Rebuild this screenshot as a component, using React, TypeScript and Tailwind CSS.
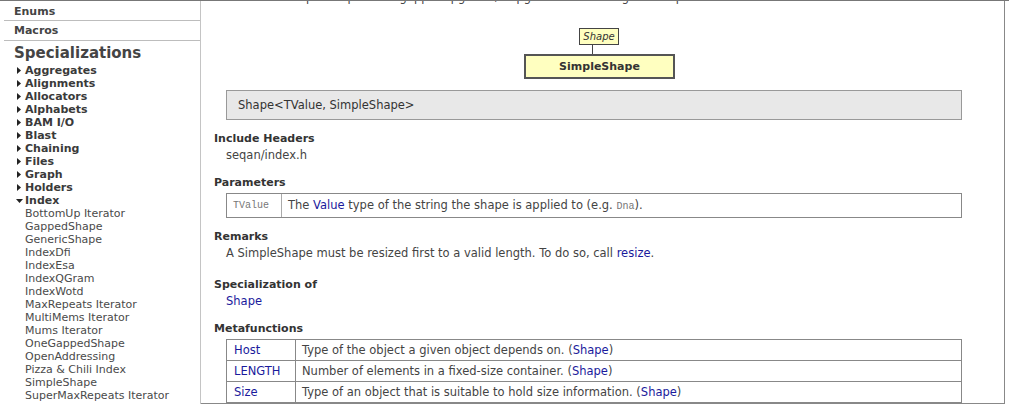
const groups = [
  "Aggregates",
  "Alignments",
  "Allocators",
  "Alphabets",
  "BAM I/O",
  "Blast",
  "Chaining",
  "Files",
  "Graph",
  "Holders",
];

const indexItems = [
  "BottomUp Iterator",
  "GappedShape",
  "GenericShape",
  "IndexDfi",
  "IndexEsa",
  "IndexQGram",
  "IndexWotd",
  "MaxRepeats Iterator",
  "MultiMems Iterator",
  "Mums Iterator",
  "OneGappedShape",
  "OpenAddressing",
  "Pizza & Chili Index",
  "SimpleShape",
  "SuperMaxRepeats Iterator",
];

const metafunctions = [
  { name: "Host", text: "Type of the object a given object depends on." },
  { name: "LENGTH", text: "Number of elements in a fixed-size container." },
  { name: "Size", text: "Type of an object that is suitable to hold size information." },
];

function Closed() {
  return (
    <svg width="4" height="7" viewBox="0 0 4 7" className="shrink-0">
      <path d="M0 0 L4 3.5 L0 7 Z" fill="#222" />
    </svg>
  );
}

function Open() {
  return (
    <svg width="7" height="4" viewBox="0 0 7 4" className="shrink-0">
      <path d="M0 0 L7 0 L3.5 4 Z" fill="#222" />
    </svg>
  );
}

function Sidebar() {
  return (
    <div className="w-[201px] shrink-0 border-r border-[#c4c4c4] text-[11px] text-[#444]">
      <div className="ml-[4px] h-[20px] border-b border-[#bdbdbd] pl-[10px] leading-[21px] font-bold">
        Enums
      </div>
      <div className="ml-[4px] h-[20px] border-b border-[#bdbdbd] pl-[10px] leading-[20px] font-bold">
        Macros
      </div>
      <div className="pl-[14px] pt-[3px] text-[15px] leading-[18px] font-bold text-[#444]">
        Specializations
      </div>
      <div className="mt-[2px] pl-[17px] leading-[13px]">
        {groups.map((g) => (
          <div key={g} className="flex items-center gap-[4px] font-bold text-[#3a3a3a]">
            <Closed />
            <span>{g}</span>
          </div>
        ))}
        <div className="-ml-[1px] flex items-center gap-[2px] font-bold text-[#3a3a3a]">
          <Open />
          <span>Index</span>
        </div>
        {indexItems.map((i) => (
          <div key={i} className="pl-[8px] text-[#4a4a4a]">
            {i}
          </div>
        ))}
      </div>
    </div>
  );
}

function Link({ children }: { children: React.ReactNode }) {
  return <span className="text-[#1a1a9c]">{children}</span>;
}

function Heading({ children, className = "" }: { children: React.ReactNode; className?: string }) {
  return (
    <div className={"text-[11px] leading-[17px] font-bold text-[#333] " + className}>{children}</div>
  );
}

export default function App() {
  return (
    <div
      className="flex h-[404px] w-[1009px] overflow-hidden border-t border-[#777] bg-white"
      style={{ fontFamily: '"DejaVu Sans", Verdana, sans-serif' }}
    >
      <Sidebar />
      <div className="h-[403px] w-[804px] shrink-0 overflow-hidden border-r border-b border-[#888] pl-[13px] pr-[42px] text-[11.5px] text-[#444]">
        {/* clipped line from the scrolled-away text */}
        <div className="flex h-[3px] items-end overflow-hidden pl-[60px]">
          <div className="leading-[14px]">
            A simple shape for ungapped q-grams, a q-gram of fixed length and span.
          </div>
        </div>

        {/* inheritance diagram */}
        <div className="mt-[24px] flex justify-center pl-[23px]">
          <div className="flex w-[151px] flex-col">
            <div className="ml-[55px] h-[17px] w-[40px] border border-[#444] bg-[#ffffc0] text-center text-[10px] leading-[15px] italic text-[#333]">
              Shape
            </div>
            <div className="ml-[68px] h-[9px] w-px bg-[#444]" />
            <div className="h-[25px] border-2 border-[#555] bg-[#ffffc0] text-center text-[11px] leading-[21px] font-bold text-[#333]">
              SimpleShape
            </div>
          </div>
        </div>

        <div className="ml-[12px] mt-[11px] h-[30px] border border-[#999] bg-[#e8e8e8] pl-[11px] text-[11.5px] leading-[28px] text-[#333]">
          Shape&lt;TValue, SimpleShape&gt;
        </div>

        <Heading className="mt-[10px]">Include Headers</Heading>
        <div className="pl-[12px] leading-[17px]">seqan/index.h</div>

        <Heading className="mt-[10px]">Parameters</Heading>
        <div className="ml-[12px] mt-[2px] flex h-[25px] border border-[#888]">
          <div className="w-[55px] shrink-0 border-r border-[#aaa] pl-[6px] text-[10px] leading-[23px] text-[#777]" style={{ fontFamily: '"Liberation Mono", monospace' }}>
            TValue
          </div>
          <div className="pl-[6px] leading-[23px]">
            The <Link>Value</Link> type of the string the shape is applied to (e.g.{" "}
            <span className="text-[10px] text-[#777]" style={{ fontFamily: '"Liberation Mono", monospace' }}>
              Dna
            </span>
            ).
          </div>
        </div>

        <Heading className="mt-[10px]">Remarks</Heading>
        <div className="pl-[12px] leading-[17px]">
          A SimpleShape must be resized first to a valid length. To do so, call <Link>resize</Link>.
        </div>

        <Heading className="mt-[14px]">Specialization of</Heading>
        <div className="pl-[12px] leading-[17px]">
          <Link>Shape</Link>
        </div>

        <Heading className="mt-[10px]">Metafunctions</Heading>
        <div className="ml-[12px] mt-[2px] border-t border-l border-r border-[#888]">
          {metafunctions.map((m) => (
            <div key={m.name} className="flex h-[21px] border-b border-[#888]">
              <div className="w-[69px] shrink-0 border-r border-[#888] pl-[7px] leading-[20px]">
                <Link>{m.name}</Link>
              </div>
              <div className="pl-[6px] leading-[20px]">
                {m.text} (<Link>Shape</Link>)
              </div>
            </div>
          ))}
        </div>
      </div>
    </div>
  );
}
